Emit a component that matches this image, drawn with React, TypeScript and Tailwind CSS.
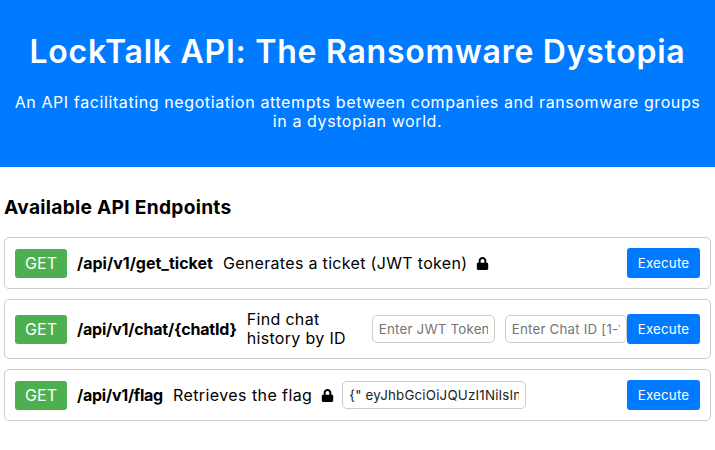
import { FaLock } from "react-icons/fa";

const font = "font-['Inter','Liberation_Sans',sans-serif]";

function Badge() {
  return (
    <span className="w-[52px] shrink-0 rounded-[3px] bg-[#4caf50] py-[5px] text-center text-[16px] leading-[19px] tracking-[0.1px] text-white">
      GET
    </span>
  );
}

function Execute() {
  return (
    <button className="ml-auto h-[30px] w-[73px] shrink-0 rounded-[3px] bg-[#007bff] pt-[1px] text-[13.33px] tracking-[0.2px] text-white">
      Execute
    </button>
  );
}

const fieldClass =
  "h-[28px] rounded-[5px] border border-[#ccc] bg-white px-[6px] text-[13.33px] tracking-[0.2px] text-[#222] outline-none placeholder:text-[#757575]";

export default function App() {
  return (
    <div className={`${font} min-h-[450px] bg-white text-black`}>
      <header className="h-[167px] bg-[#007bff] px-[10px] pt-[33px] text-center text-white">
        <h1 className="text-[32px] font-semibold leading-[38px] tracking-[0.74px] whitespace-nowrap">
          LockTalk API: The Ransomware Dystopia
        </h1>
        <p className="mt-[22px] text-[16px] leading-[19px] tracking-[0.6px]">
          An API facilitating negotiation attempts between companies and ransomware groups
          <br />
          in a dystopian world.
        </p>
      </header>
      <main className="px-[4px] pt-[29px]">
        <h2 className="text-[19.2px] font-bold leading-[23px] tracking-[0.27px]">Available API Endpoints</h2>
        <div className="mt-[18px] flex flex-col gap-[10px]">
          <div className="flex h-[52px] items-center rounded-[5px] border border-[#ccc] pl-[10px] pr-[10px]">
            <Badge />
            <span className="ml-[10px] text-[16px] font-bold tracking-[0px]">/api/v1/get_ticket</span>
            <span className="ml-[10px] text-[16px] tracking-[0.32px]">Generates a ticket (JWT token)</span>
            <FaLock className="ml-[9px] h-[13px] w-[13px]" />
            <Execute />
          </div>
          <div className="flex h-[60px] items-center rounded-[5px] border border-[#ccc] pl-[10px] pr-[10px]">
            <Badge />
            <span className="ml-[10px] text-[16px] font-bold tracking-[-0.2px]">/api/v1/chat/&#123;chatId&#125;</span>
            <span className="ml-[10px] w-[115px] shrink-0 text-[16px] leading-[19px] tracking-[0.32px]">
              Find chat history by ID
            </span>
            <input className={`${fieldClass} ml-[10px] w-[123px]`} placeholder="Enter JWT Token" />
            <input className={`${fieldClass} ml-[10px] w-[122px]`} placeholder="Enter Chat ID [1-10]" />
            <Execute />
          </div>
          <div className="flex h-[52px] items-center rounded-[5px] border border-[#ccc] pl-[10px] pr-[10px]">
            <Badge />
            <span className="ml-[10px] text-[16px] font-bold tracking-[-0.25px]">/api/v1/flag</span>
            <span className="ml-[10px] text-[16px] tracking-[0.42px]">Retrieves the flag</span>
            <FaLock className="ml-[9px] h-[13px] w-[13px]" />
            <input
              className={`${fieldClass} ml-[8px] w-[184px]`}
              readOnly
              value={'{" eyJhbGciOiJQUzI1NiIsInR5cCI6IkpXVCJ9'}
            />
            <Execute />
          </div>
        </div>
      </main>
    </div>
  );
}
